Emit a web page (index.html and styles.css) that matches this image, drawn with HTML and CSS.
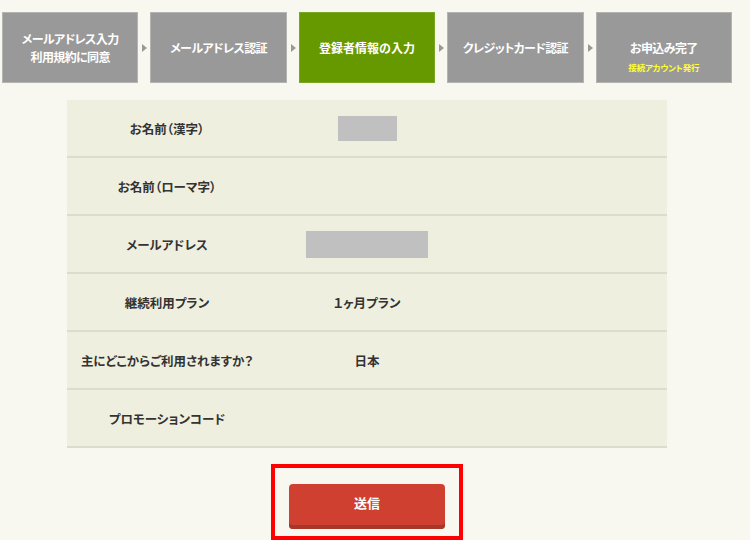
FILE: index.html
```html
<!DOCTYPE html>
<html lang="ja">
<head>
  <meta charset="UTF-8">
  <title>登録者情報の入力</title>
  <link rel="stylesheet" href="styles.css">
</head>
<body>

<div class="sivu">
  <ol class="vaiheet">
    <li class="vaihe">メールアドレス入力<br>利用規約に同意</li>
    <li class="nuoli"></li>
    <li class="vaihe">メールアドレス認証</li>
    <li class="nuoli"></li>
    <li class="vaihe aktiivinen">登録者情報の入力</li>
    <li class="nuoli"></li>
    <li class="vaihe">クレジットカード認証</li>
    <li class="nuoli"></li>
    <li class="vaihe viimeinen">お申込み完了<span class="alaotsikko">接続アカウント発行</span></li>
  </ol>

  <table class="tiedot">
    <tr>
      <th>お名前（漢字）</th>
      <td><span class="peitto lyhyt"></span></td>
      <td></td>
    </tr>
    <tr>
      <th>お名前（ローマ字）</th>
      <td></td>
      <td></td>
    </tr>
    <tr>
      <th>メールアドレス</th>
      <td><span class="peitto pitka"></span></td>
      <td></td>
    </tr>
    <tr>
      <th>継続利用プラン</th>
      <td>１ヶ月プラン</td>
      <td></td>
    </tr>
    <tr>
      <th>主にどこからご利用されますか？</th>
      <td>日本</td>
      <td></td>
    </tr>
    <tr>
      <th>プロモーションコード</th>
      <td></td>
      <td></td>
    </tr>
  </table>

  <div class="lahetys">
    <div class="korostus">
      <button type="button" class="laheta">送信</button>
    </div>
  </div>
</div>

</body>
</html>
```

FILE: styles.css
```css
body {
  margin: 0;
  background-color: #f8f7f0;
  font-family: "Noto Sans CJK JP", "Liberation Sans", sans-serif;
  font-feature-settings: "palt";
  color: #333;
  overflow: hidden;
}
.sivu {
  width: 730px;
  padding: 12px 0 0 2px;
}
.vaiheet {
  display: flex;
  list-style: none;
  margin: 0;
  padding: 0;
}
.vaihe {
  flex: 1;
  height: 71px;
  box-sizing: border-box;
  border: 1px solid #b4b4b0;
  background-color: #999;
  color: #fff;
  font-size: 12px;
  font-weight: bold;
  line-height: 18px;
  letter-spacing: -0.6px;
  display: flex;
  flex-direction: column;
  align-items: center;
  justify-content: center;
  text-align: center;
}
.vaihe.aktiivinen {
  background-color: #669900;
  border-color: #7aa626;
  letter-spacing: 0;
}
.vaihe.viimeinen {
  padding-top: 17px;
}
.alaotsikko {
  color: #ffff33;
  font-size: 8.5px;
  line-height: 12px;
  margin-top: 4px;
  letter-spacing: -0.2px;
}
.nuoli {
  width: 12px;
  display: flex;
  align-items: center;
  justify-content: center;
}
.nuoli::before {
  content: "";
  border-left: 5px solid #999;
  border-top: 4px solid transparent;
  border-bottom: 4px solid transparent;
  margin-left: 1px;
}
.tiedot {
  width: 600px;
  margin: 17px auto 0;
  border-collapse: collapse;
  background-color: #efefdf;
  table-layout: fixed;
}
.tiedot th,
.tiedot td {
  width: 200px;
  height: 56px;
  padding: 0;
  border-bottom: 2px solid #dcdccb;
  font-size: 12.5px;
  font-weight: bold;
  text-align: center;
  vertical-align: middle;
  color: #333;
}
.peitto {
  display: inline-block;
  vertical-align: middle;
  background-color: #c0c0c0;
}
.peitto.lyhyt {
  width: 59px;
  height: 25px;
}
.peitto.pitka {
  width: 122px;
  height: 27px;
}
.lahetys {
  display: flex;
  justify-content: center;
  margin-top: 16px;
}
.korostus {
  border: 4px solid #ff0000;
  padding: 16px 14px 7px;
}
.laheta {
  display: block;
  width: 156px;
  height: 45px;
  border: none;
  border-radius: 4px;
  background-color: #d04030;
  box-shadow: inset 0 -4px 0 #a8372b;
  color: #fff;
  font-family: "Noto Sans CJK JP", sans-serif;
  font-size: 13px;
  font-weight: bold;
  padding-bottom: 10px;
  cursor: pointer;
}
```
